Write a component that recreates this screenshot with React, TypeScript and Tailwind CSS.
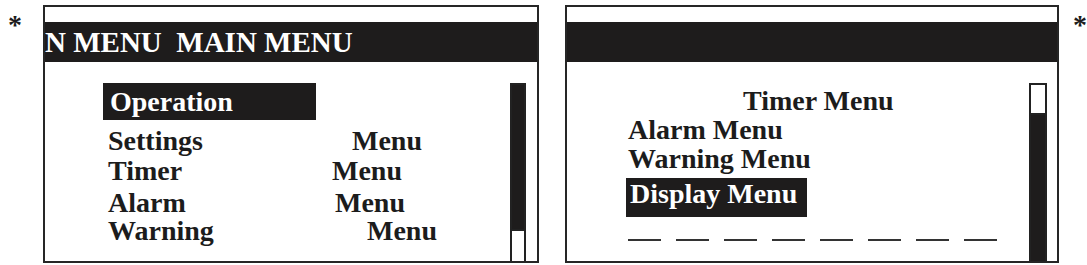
const menuRows = [
  { label: "Settings", width: "w-[244px]", height: "h-[30px]" },
  { label: "Timer", width: "w-[224px]", height: "h-[32px]" },
  { label: "Alarm", width: "w-[227px]", height: "h-[28px]" },
  { label: "Warning", width: "w-[259px]", height: "h-[30px]" },
];

function PanelHeader({ title }: { title?: string }) {
  return (
    <>
      <div className="h-[15px] shrink-0 bg-white" />
      <div className="h-[40px] shrink-0 overflow-hidden whitespace-pre bg-[#1e1c1c] text-[29px] leading-[40px] text-white">
        {title}
      </div>
    </>
  );
}

function Asterisk() {
  return <div className="pt-[6px] text-[28px] leading-[28px]">*</div>;
}

export default function App() {
  return (
    <div className="flex h-[265px] w-[1087px] bg-white pt-[5px] font-['Liberation_Serif','Times_New_Roman',serif] font-bold text-[#1c1c1c]">
      <div className="w-[43px] pl-[8px]">
        <Asterisk />
      </div>

      {/* main menu screen */}
      <div className="flex h-[258px] w-[496px] flex-col overflow-hidden border-2 border-[#262626]">
        <PanelHeader title={"N MENU  MAIN MENU"} />
        <div className="flex flex-1">
          <div className="flex-1 pl-[58px] pt-[21px]">
            <div className="h-[37px] w-[213px] bg-[#1e1c1c] pl-[7px] text-[28px] leading-[37px] text-white">
              Operation
            </div>
            <div className="mt-[6px] text-[28px] leading-[30px]">
              {menuRows.map((row) => (
                <div key={row.label} className={`flex pl-[5px] ${row.height}`}>
                  <span className={`shrink-0 ${row.width}`}>{row.label}</span>
                  <span>Menu</span>
                </div>
              ))}
            </div>
          </div>
          <div className="mr-[11px] mt-[21px] flex w-[16px] flex-col border-x-2 border-t-2 border-[#222]">
            <div className="flex-1 bg-[#1e1c1c]" />
            <div className="h-[32px] border-t-2 border-[#222] bg-white" />
          </div>
        </div>
      </div>

      <div className="w-[26px]" />

      {/* sub menu screen */}
      <div className="flex h-[258px] w-[494px] flex-col overflow-hidden border-2 border-[#262626]">
        <PanelHeader />
        <div className="flex flex-1">
          <div className="flex-1 pl-[61px] pt-[24px] text-[28px] leading-[29px]">
            <div className="pl-[115px]">Timer Menu</div>
            <div>Alarm Menu</div>
            <div>Warning Menu</div>
            <div className="-ml-[2px] mt-[5px] h-[39px] w-[181px] bg-[#1e1c1c] pl-[4px] leading-[32px] text-white">
              Display Menu
            </div>
            <div className="mt-[22px] flex gap-[15px]">
              {Array.from({ length: 8 }).map((_, i) => (
                <div key={i} className="h-[2px] w-[33px] bg-[#333]" />
              ))}
            </div>
          </div>
          <div className="mr-[10px] mt-[21px] flex w-[18px] flex-col border-x-2 border-t-2 border-[#222]">
            <div className="h-[30px] border-b-2 border-[#222] bg-white" />
            <div className="flex-1 bg-[#1e1c1c]" />
          </div>
        </div>
      </div>

      <div className="pl-[14px]">
        <Asterisk />
      </div>
    </div>
  );
}
